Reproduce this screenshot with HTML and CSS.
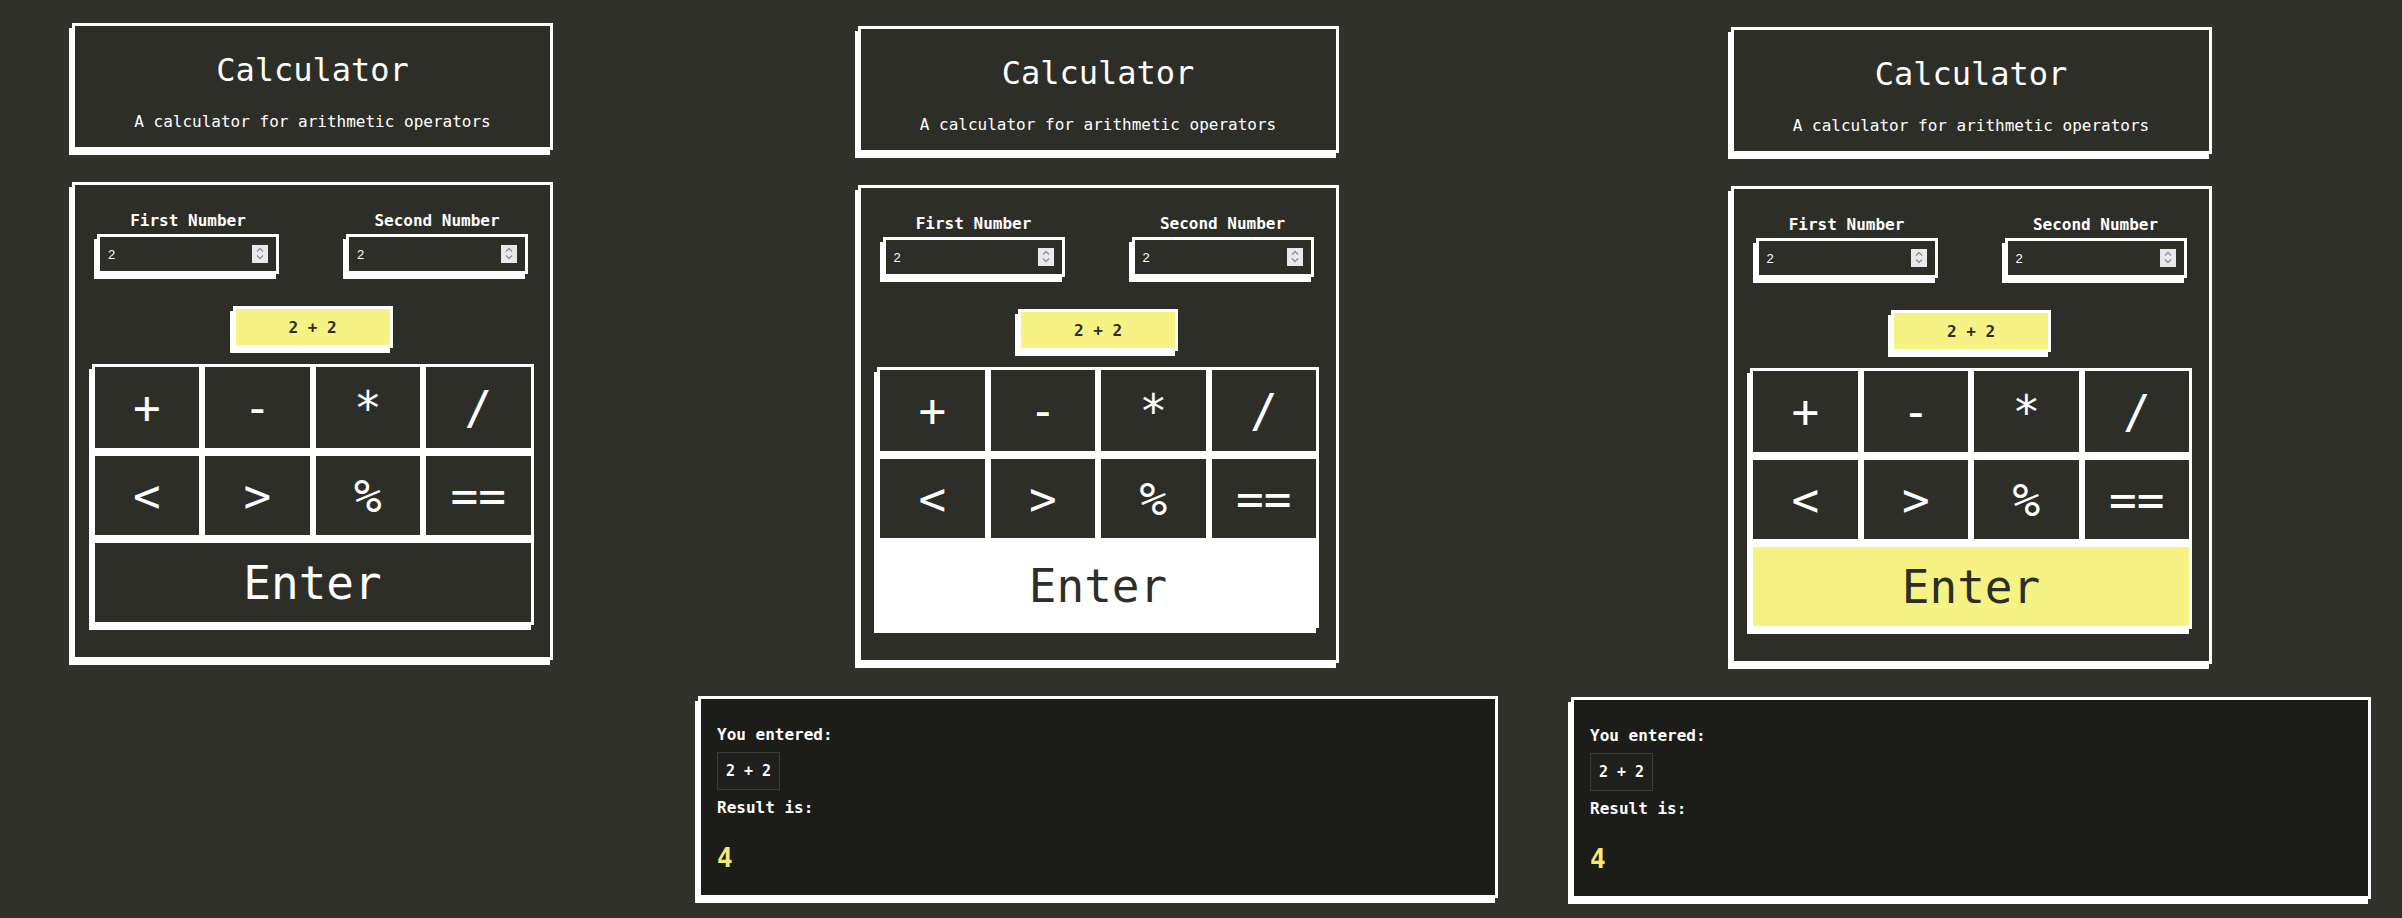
FILE: index.html
```html
<!DOCTYPE html>
<html lang="en">
<head>
<meta charset="utf-8">
<title>Calculator</title>
<link rel="stylesheet" href="styles.css">
</head>
<body>
<main class="stage">

  <div class="panel panel--a">
    <header class="card head">
      <h1 class="title">Calculator</h1>
      <p class="subtitle">A calculator for arithmetic operators</p>
    </header>
    <section class="card calc">
      <div class="fields">
        <div class="field">
          <span class="field-label">First Number</span>
          <div class="num-input"><span class="num-value">2</span><svg class="spinner" viewBox="0 0 16 18" width="16" height="18"><rect width="16" height="18" fill="#e9e9ed"/><polyline points="5,6.5 8,3.5 11,6.5" fill="none" stroke="#8d8d92" stroke-width="1.3"/><polyline points="5,10.5 8,13.5 11,10.5" fill="none" stroke="#8d8d92" stroke-width="1.3"/></svg></div>
        </div>
        <div class="field">
          <span class="field-label">Second Number</span>
          <div class="num-input"><span class="num-value">2</span><svg class="spinner" viewBox="0 0 16 18" width="16" height="18"><rect width="16" height="18" fill="#e9e9ed"/><polyline points="5,6.5 8,3.5 11,6.5" fill="none" stroke="#8d8d92" stroke-width="1.3"/><polyline points="5,10.5 8,13.5 11,10.5" fill="none" stroke="#8d8d92" stroke-width="1.3"/></svg></div>
        </div>
      </div>
      <div class="expr">2 + 2</div>
      <div class="keys">
        <button class="key">+</button>
        <button class="key">-</button>
        <button class="key">*</button>
        <button class="key">/</button>
        <button class="key">&lt;</button>
        <button class="key">&gt;</button>
        <button class="key">%</button>
        <button class="key">==</button>
        <button class="key key--enter">Enter</button>
      </div>
    </section>
  </div>

  <div class="panel panel--b">
    <header class="card head">
      <h1 class="title">Calculator</h1>
      <p class="subtitle">A calculator for arithmetic operators</p>
    </header>
    <section class="card calc">
      <div class="fields">
        <div class="field">
          <span class="field-label">First Number</span>
          <div class="num-input"><span class="num-value">2</span><svg class="spinner" viewBox="0 0 16 18" width="16" height="18"><rect width="16" height="18" fill="#e9e9ed"/><polyline points="5,6.5 8,3.5 11,6.5" fill="none" stroke="#8d8d92" stroke-width="1.3"/><polyline points="5,10.5 8,13.5 11,10.5" fill="none" stroke="#8d8d92" stroke-width="1.3"/></svg></div>
        </div>
        <div class="field">
          <span class="field-label">Second Number</span>
          <div class="num-input"><span class="num-value">2</span><svg class="spinner" viewBox="0 0 16 18" width="16" height="18"><rect width="16" height="18" fill="#e9e9ed"/><polyline points="5,6.5 8,3.5 11,6.5" fill="none" stroke="#8d8d92" stroke-width="1.3"/><polyline points="5,10.5 8,13.5 11,10.5" fill="none" stroke="#8d8d92" stroke-width="1.3"/></svg></div>
        </div>
      </div>
      <div class="expr">2 + 2</div>
      <div class="keys">
        <button class="key">+</button>
        <button class="key">-</button>
        <button class="key">*</button>
        <button class="key">/</button>
        <button class="key">&lt;</button>
        <button class="key">&gt;</button>
        <button class="key">%</button>
        <button class="key">==</button>
        <button class="key key--enter key--white">Enter</button>
      </div>
    </section>
    <section class="card result">
      <p class="result-label">You entered:</p>
      <code class="result-code">2 + 2</code>
      <p class="result-label">Result is:</p>
      <p class="result-value">4</p>
    </section>
  </div>

  <div class="panel panel--c">
    <header class="card head">
      <h1 class="title">Calculator</h1>
      <p class="subtitle">A calculator for arithmetic operators</p>
    </header>
    <section class="card calc">
      <div class="fields">
        <div class="field">
          <span class="field-label">First Number</span>
          <div class="num-input"><span class="num-value">2</span><svg class="spinner" viewBox="0 0 16 18" width="16" height="18"><rect width="16" height="18" fill="#e9e9ed"/><polyline points="5,6.5 8,3.5 11,6.5" fill="none" stroke="#8d8d92" stroke-width="1.3"/><polyline points="5,10.5 8,13.5 11,10.5" fill="none" stroke="#8d8d92" stroke-width="1.3"/></svg></div>
        </div>
        <div class="field">
          <span class="field-label">Second Number</span>
          <div class="num-input"><span class="num-value">2</span><svg class="spinner" viewBox="0 0 16 18" width="16" height="18"><rect width="16" height="18" fill="#e9e9ed"/><polyline points="5,6.5 8,3.5 11,6.5" fill="none" stroke="#8d8d92" stroke-width="1.3"/><polyline points="5,10.5 8,13.5 11,10.5" fill="none" stroke="#8d8d92" stroke-width="1.3"/></svg></div>
        </div>
      </div>
      <div class="expr">2 + 2</div>
      <div class="keys">
        <button class="key">+</button>
        <button class="key">-</button>
        <button class="key">*</button>
        <button class="key">/</button>
        <button class="key">&lt;</button>
        <button class="key">&gt;</button>
        <button class="key">%</button>
        <button class="key">==</button>
        <button class="key key--enter key--yellow">Enter</button>
      </div>
    </section>
    <section class="card result">
      <p class="result-label">You entered:</p>
      <code class="result-code">2 + 2</code>
      <p class="result-label">Result is:</p>
      <p class="result-value">4</p>
    </section>
  </div>

</main>
</body>
</html>
```

FILE: styles.css
```css
* { box-sizing: border-box; }

html, body {
  margin: 0;
  padding: 0;
  background: #32322c;
  width: 2402px;
  height: 918px;
  overflow: hidden;
  font-family: "DejaVu Sans Mono", "Liberation Mono", monospace;
  color: #ffffff;
}

.stage {
  display: flex;
  align-items: flex-start;
}

.panel {
  display: flex;
  flex-direction: column;
  align-items: center;
}

.panel--a { width: 625px; padding-top: 23px; }
.panel--b { width: 946px; padding-top: 26px; }
.panel--c { width: 800px; padding-top: 27px; }

.card {
  background: #2e2e29;
  border: 3px solid #ffffff;
  box-shadow: -3px 5px 0 0 #ffffff;
}

/* header */
.head {
  width: 481px;
  padding: 25px 0 15px;
  text-align: center;
}

.title {
  margin: 0;
  font-size: 32px;
  line-height: 38px;
  font-weight: normal;
}

.subtitle {
  margin: 23px 0 0;
  font-size: 16px;
  line-height: 20px;
}

/* calculator */
.calc {
  width: 481px;
  margin-top: 32px;
  padding: 26px 0 32px;
  display: flex;
  flex-direction: column;
  align-items: center;
}

.fields {
  width: 100%;
  display: flex;
  justify-content: space-between;
  padding: 0 22px 0 22px;
}

.field {
  display: flex;
  flex-direction: column;
  align-items: center;
  gap: 3px;
}

.field-label {
  font-size: 16px;
  line-height: 20px;
  font-weight: bold;
}

.num-input {
  width: 182px;
  height: 40px;
  border: 3px solid #ffffff;
  box-shadow: -3px 5px 0 0 #ffffff;
  background: #2e2e29;
  display: flex;
  align-items: center;
  justify-content: space-between;
  padding: 0 8px;
}

.num-value {
  font-family: "Liberation Sans", Arial, sans-serif;
  font-size: 13px;
  color: #ffffff;
}

.spinner { display: block; }

.expr {
  margin-top: 32px;
  width: 160px;
  height: 42px;
  border: 3px solid #ffffff;
  box-shadow: -3px 5px 0 0 #ffffff;
  background: #f6f283;
  color: #2e2e29;
  font-size: 16px;
  font-weight: bold;
  display: flex;
  align-items: center;
  justify-content: center;
}

.keys {
  margin-top: 16px;
  width: 442px;
  background: #ffffff;
  box-shadow: -3px 5px 0 0 #ffffff;
  padding: 3px;
  display: grid;
  grid-template-columns: repeat(4, 1fr);
  grid-template-rows: 81px 79px 79px;
  column-gap: 6px;
  row-gap: 8px;
}

.key {
  margin: 0;
  border: 0;
  padding: 0;
  background: #2e2e29;
  color: #ffffff;
  font-family: "DejaVu Sans Mono", "Liberation Mono", monospace;
  font-size: 46px;
  font-weight: normal;
  display: flex;
  align-items: center;
  justify-content: center;
}

.key--enter {
  grid-column: 1 / -1;
  font-size: 46px;
}

.key--white {
  background: #ffffff;
  color: #2e2e29;
}

.key--yellow {
  background: #f6f283;
  color: #2e2e29;
}

/* result */
.result {
  width: 800px;
  margin-top: 33px;
  background: #1c1c18;
  padding: 26px 16px 21px;
  display: flex;
  flex-direction: column;
  align-items: flex-start;
}

.result-label {
  margin: 0;
  font-size: 16px;
  line-height: 20px;
  font-weight: bold;
}

.result-code {
  margin: 7px 0 8px;
  font-family: "DejaVu Sans Mono", "Liberation Mono", monospace;
  font-size: 15px;
  font-weight: bold;
  line-height: 20px;
  padding: 8px 8px;
  background: #1f1f1e;
  border: 1px solid #3a3a37;
}

.result-value {
  margin: 24px 0 0;
  font-size: 26px;
  line-height: 32px;
  font-weight: bold;
  color: #f3ea76;
}
```
